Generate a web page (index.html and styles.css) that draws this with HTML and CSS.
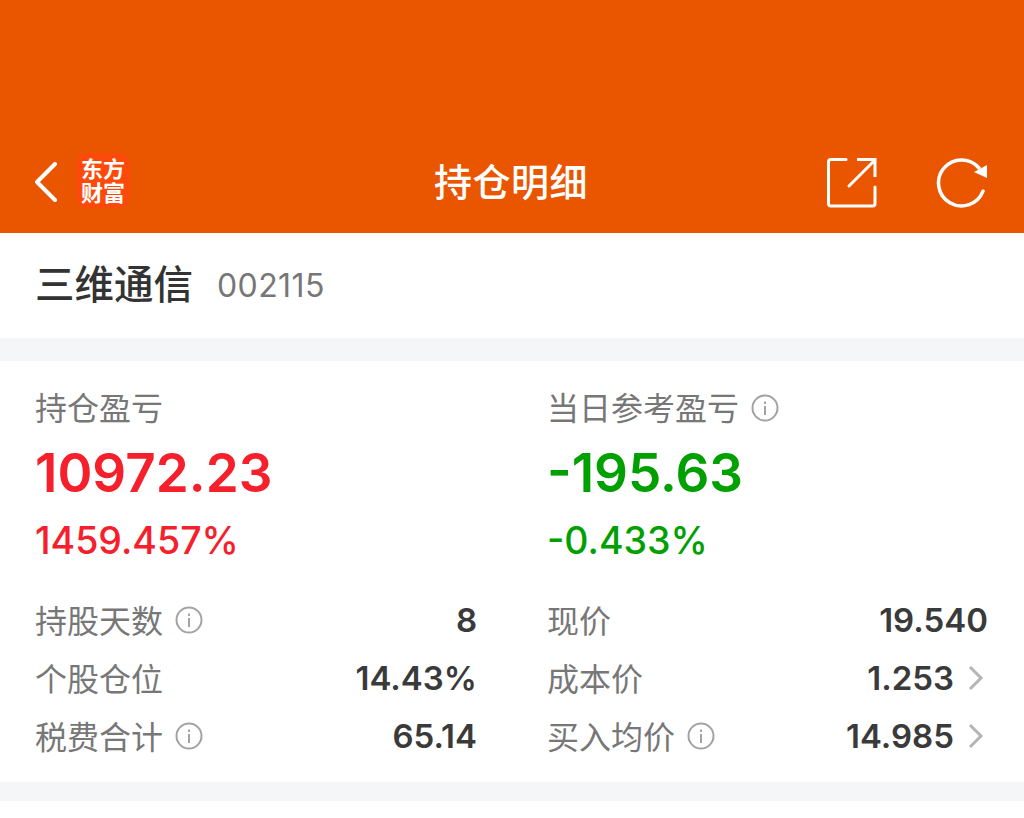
FILE: index.html
```html
<!DOCTYPE html>
<html lang="zh-CN">
<head>
    <meta charset="UTF-8">
    <title>持仓明细</title>
    <link rel="stylesheet" href="styles.css">
</head>
<body>
    <div class="top-bar">
        <div class="top-left">
            <svg class="back-icon" width="24" height="40" viewBox="0 0 24 40"><path d="M21 2 L3 20 L21 38" fill="none" stroke="#fff" stroke-width="4" stroke-linecap="round" stroke-linejoin="round"/></svg>
            <div class="logo">东方<br>财富</div>
        </div>
        <div class="top-title">持仓明细</div>
        <div class="top-right">
            <svg width="50" height="50" viewBox="0 0 50 50"><path d="M19 1.500 H4 Q1.500 1.500 1.500 4 V45.500 Q1.500 48 4 48 H45.500 Q48 48 48 45.500 V29" fill="none" stroke="#fff" stroke-width="3" stroke-linecap="round"/><path d="M22 28 L47 3" fill="none" stroke="#fff" stroke-width="3" stroke-linecap="round"/><path d="M30 1.500 H48 V19" fill="none" stroke="#fff" stroke-width="3"/></svg>
            <svg width="52" height="50" viewBox="0 0 52 50"><path d="M47 33.200 A23 23 0 1 1 43 10" fill="none" stroke="#fff" stroke-width="3.500" stroke-linecap="round"/><path d="M51 7 L51 20 L38 14 Z" fill="#fff"/></svg>
        </div>
    </div>

    <div class="stock-row">
        <span class="stock-name">三维通信</span>
        <span class="stock-code">002115</span>
    </div>

    <div class="card">
        <div class="summary">
            <div class="summary-col">
                <div class="summary-label">持仓盈亏</div>
                <div class="summary-value up">10972.23</div>
                <div class="summary-pct up">1459.457%</div>
            </div>
            <div class="summary-col">
                <div class="summary-label">当日参考盈亏 <svg class="info" width="28" height="28" viewBox="0 0 28 28"><use href="#info"/></svg></div>
                <div class="summary-value down">-195.63</div>
                <div class="summary-pct down">-0.433%</div>
            </div>
        </div>
        <div class="details">
            <div class="detail">
                <span class="detail-label">持股天数 <svg class="info" width="28" height="28" viewBox="0 0 28 28"><use href="#info"/></svg></span>
                <span class="detail-value">8</span>
            </div>
            <div class="detail">
                <span class="detail-label">现价</span>
                <span class="detail-value">19.540</span>
            </div>
            <div class="detail">
                <span class="detail-label">个股仓位</span>
                <span class="detail-value">14.43%</span>
            </div>
            <div class="detail">
                <span class="detail-label">成本价</span>
                <span class="detail-value arrow">1.253 <svg width="16" height="26" viewBox="0 0 16 26"><use href="#chevron"/></svg></span>
            </div>
            <div class="detail">
                <span class="detail-label">税费合计 <svg class="info" width="28" height="28" viewBox="0 0 28 28"><use href="#info"/></svg></span>
                <span class="detail-value">65.14</span>
            </div>
            <div class="detail">
                <span class="detail-label">买入均价 <svg class="info" width="28" height="28" viewBox="0 0 28 28"><use href="#info"/></svg></span>
                <span class="detail-value arrow">14.985 <svg width="16" height="26" viewBox="0 0 16 26"><use href="#chevron"/></svg></span>
            </div>
        </div>
    </div>

    <div class="next-card"></div>

    <svg class="defs" width="0" height="0">
        <symbol id="info" viewBox="0 0 28 28">
            <circle cx="14" cy="14" r="12.500" fill="none" stroke="#a3a3a3" stroke-width="2"/>
            <rect x="13" y="12" width="2" height="9" fill="#a3a3a3"/>
            <rect x="13" y="7.500" width="2" height="2.500" fill="#a3a3a3"/>
        </symbol>
        <symbol id="chevron" viewBox="0 0 16 26">
            <path d="M2 2 L13 13 L2 24" fill="none" stroke="#b5b5b5" stroke-width="3"/>
        </symbol>
    </svg>
</body>
</html>
```

FILE: styles.css
```css
* {
    box-sizing: border-box;
}

body {
    font-family: Inter, "Noto Sans CJK SC", sans-serif;
    margin: 0;
    padding: 0;
    height: 818px;
    overflow: hidden;
    background-color: #f5f6f8;
}

.top-bar {
    height: 233px;
    padding: 153px 36px 25px 34px;
    background-color: #ea5600;
    display: grid;
    grid-template-columns: 1fr auto 1fr;
    align-items: center;
    color: #fff;
}

.top-left {
    display: flex;
    align-items: center;
    gap: 18px;
}

.back-icon {
    flex-shrink: 0;
    margin-top: 3px;
}

.logo {
    width: 54px;
    height: 55px;
    border-radius: 12px;
    background-color: #fc4a0a;
    color: #fff;
    font-family: "Noto Sans CJK SC", sans-serif;
    font-size: 22px;
    font-weight: 700;
    line-height: 24px;
    text-align: center;
    padding-top: 2px;
}

.top-title {
    font-family: "Noto Sans CJK SC", sans-serif;
    font-size: 38px;
    font-weight: 500;
    letter-spacing: 0.500px;
    line-height: 53px;
    margin-bottom: 2px;
}

.top-right {
    display: flex;
    justify-content: flex-end;
    align-items: center;
    gap: 59px;
    padding-top: 5px;
}

.stock-row {
    height: 105px;
    padding: 0 35px;
    background-color: #fff;
    display: flex;
    align-items: center;
    gap: 24px;
}

.stock-name {
    font-family: "Noto Sans CJK SC", sans-serif;
    font-size: 39.500px;
    font-weight: 500;
    color: #333;
    margin-bottom: 8px;
}

.stock-code {
    font-size: 32px;
    letter-spacing: 0.400px;
    color: #777;
}

.card {
    margin-top: 23px;
    height: 421px;
    padding: 22px 36px 0 35px;
    background-color: #fff;
}

.summary {
    display: grid;
    grid-template-columns: 512px 1fr;
}

.summary-label {
    height: 46px;
    font-family: "Noto Sans CJK SC", sans-serif;
    font-size: 32px;
    line-height: 46px;
    color: #777;
    display: flex;
    align-items: center;
    gap: 12px;
}

.summary-label .info {
    margin-top: 4px;
}

.summary-value {
    margin-top: 12px;
    font-size: 53px;
    font-weight: 600;
    line-height: 64px;
}

.summary-pct {
    margin-top: 14px;
    font-size: 37.500px;
    font-weight: 500;
    line-height: 44px;
}

.up {
    color: #f5202c;
}

.down {
    color: #00a000;
}

.details {
    margin-top: 28px;
    display: grid;
    grid-template-columns: 442px 441px;
    column-gap: 70px;
    grid-auto-rows: 58px;
}

.detail {
    display: flex;
    justify-content: space-between;
    align-items: center;
}

.detail-label {
    font-family: "Noto Sans CJK SC", sans-serif;
    font-size: 32px;
    color: #777;
    display: flex;
    align-items: center;
    gap: 12px;
    padding-bottom: 2px;
}

.detail-label .info {
    margin-top: 2px;
}

.detail-value {
    font-size: 33px;
    font-weight: 600;
    color: #3a3a3a;
    display: flex;
    align-items: center;
    gap: 14px;
}

.detail-value.arrow {
    margin-right: 4px;
}

.info {
    flex-shrink: 0;
}

.next-card {
    margin-top: 19px;
    height: 17px;
    background-color: #fff;
}

.defs {
    position: absolute;
}
```
